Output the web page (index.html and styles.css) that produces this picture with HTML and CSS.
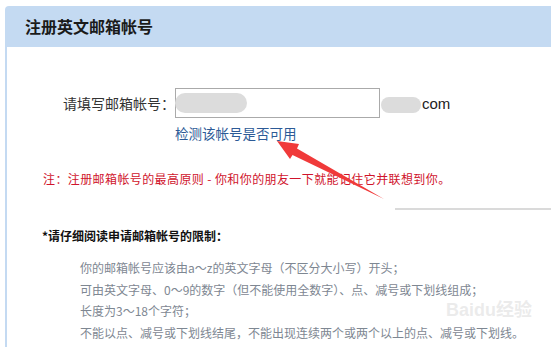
FILE: index.html
```html
<!DOCTYPE html>
<html lang="zh-CN">
<head>
<meta charset="utf-8">
<title>注册英文邮箱帐号</title>
<link rel="stylesheet" href="styles.css">
</head>
<body>
<div class="panel">
  <div class="panel-head">注册英文邮箱帐号</div>
  <div class="panel-body">
    <div class="form-row">
      <label class="form-label">请填写邮箱帐号：</label>
      <div class="input-box"><span class="blur blur-in"></span></div>
      <span class="blur blur-domain"></span><span class="domain">com</span>
    </div>
    <a class="check-link">检测该帐号是否可用</a>
    <p class="note">注：注册邮箱帐号的最高原则 - 你和你的朋友一下就能记住它并联想到你。</p>
    <div class="divider"></div>
    <p class="rules-title">*请仔细阅读申请邮箱帐号的限制：</p>
    <ul class="rules">
      <li>你的邮箱帐号应该由a～z的英文字母（不区分大小写）开头；</li>
      <li>可由英文字母、0～9的数字（但不能使用全数字）、点、减号或下划线组成；</li>
      <li>长度为3～18个字符；</li>
      <li>不能以点、减号或下划线结尾，不能出现连续两个或两个以上的点、减号或下划线。</li>
    </ul>
  </div>
</div>
<div class="watermark">Baidu经验</div>
<svg class="arrow" width="551" height="347" viewBox="0 0 551 347">
  <polygon points="277,141 299,144 297,148.5 384,199 292.5,155 290,159" fill="#f03a3a"/>
</svg>
</body>
</html>
```

FILE: styles.css
```css
html, body {
  margin: 0;
  padding: 0;
  background: #ffffff;
}
body {
  font-family: "Noto Sans CJK SC", "Liberation Sans", sans-serif;
  color: #333;
  width: 551px;
  height: 347px;
  overflow: hidden;
  position: relative;
}
.panel {
  margin: 6px 0 0 5px;
}
.panel-head {
  height: 41px;
  line-height: 41px;
  background: #c4daf2;
  border-top-left-radius: 4px;
  padding-left: 20px;
  font-size: 16px;
  font-weight: bold;
  color: #1a1a1a;
}
.panel-body {
  border-left: 2px solid #c4daf2;
  height: 300px;
  padding-top: 41px;
  box-sizing: border-box;
}
.form-row {
  display: flex;
  align-items: center;
}
.form-label {
  margin-left: 56px;
  width: 112px;
  font-size: 14px;
  line-height: 20px;
  color: #333;
}
.input-box {
  width: 203px;
  height: 28px;
  border: 1px solid #aaa;
  display: flex;
  align-items: center;
}
.blur {
  display: inline-block;
  background: #dcdcdc;
  border-radius: 10px;
}
.blur-in {
  width: 72px;
  height: 20px;
  margin-left: -1px;
}
.blur-domain {
  width: 40px;
  height: 16px;
  margin-left: 1px;
  margin-top: 4px;
  border-radius: 8px;
}
.domain {
  font-size: 15px;
  font-family: "Liberation Sans", sans-serif;
  color: #222;
  margin-left: 1px;
}
.check-link {
  display: block;
  margin: 5px 0 0 168px;
  font-size: 13.5px;
  line-height: 20px;
  color: #2c5a96;
}
.note {
  margin: 27px 0 0 36px;
  font-size: 12px;
  line-height: 18px;
  letter-spacing: 0.4px;
  color: #d0142c;
}
.divider {
  margin: 20px 0 0 388px;
  height: 2px;
  background: #dadada;
}
.rules-title {
  margin: 17px 0 0 35px;
  font-size: 12px;
  line-height: 18px;
  font-weight: bold;
  color: #111;
}
.rules {
  list-style: none;
  margin: 12px 0 0 73px;
  padding: 0;
  font-size: 12px;
  line-height: 21.6px;
  color: #7e8792;
}
.watermark {
  position: absolute;
  left: 446px;
  top: 299px;
  white-space: nowrap;
  font-family: "Liberation Sans", "Noto Sans CJK SC", sans-serif;
  font-size: 18px;
  line-height: 22px;
  font-weight: bold;
  color: rgba(215, 215, 215, 0.5);
}
.arrow {
  position: absolute;
  left: 0;
  top: 0;
  pointer-events: none;
}
```
